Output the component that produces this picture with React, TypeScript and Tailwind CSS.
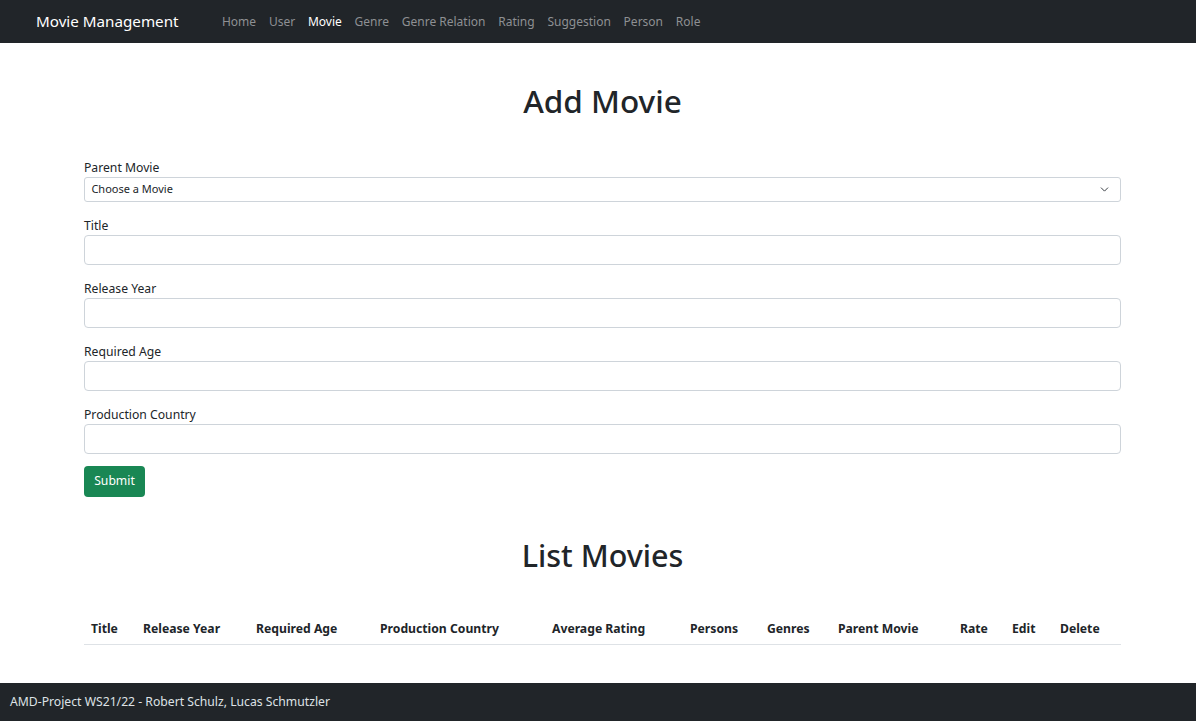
import { ChevronDown } from 'lucide-react'

const font = { fontFamily: '"Noto Sans", "Open Sans", sans-serif' }

const navLinks = ['Home', 'User', 'Movie', 'Genre', 'Genre Relation', 'Rating', 'Suggestion', 'Person', 'Role']

const columns = [
  { label: 'Title', w: 'w-[52px]' },
  { label: 'Release Year', w: 'w-[113px]' },
  { label: 'Required Age', w: 'w-[124px]' },
  { label: 'Production Country', w: 'w-[172px]' },
  { label: 'Average Rating', w: 'w-[138px]' },
  { label: 'Persons', w: 'w-[77px]' },
  { label: 'Genres', w: 'w-[71px]' },
  { label: 'Parent Movie', w: 'w-[122px]' },
  { label: 'Rate', w: 'w-[52px]' },
  { label: 'Edit', w: 'w-[48px]' },
  { label: 'Delete', w: 'w-[68px]' },
]

const fields = ['Title', 'Release Year', 'Required Age', 'Production Country']

export default function App() {
  return (
    <div className="min-h-[721px] flex flex-col bg-white text-[#212529]" style={font}>
      <nav className="h-[43px] shrink-0 bg-[#212529] flex items-center pl-[36px]">
        <span className="text-[15.2px] text-white mr-[37px]">Movie Management</span>
        <ul className="flex">
          {navLinks.map((link) => (
            <li key={link}>
              <a
                href="#"
                className={`block px-[6.4px] text-[12px] ${link === 'Movie' ? 'text-white' : 'text-[#8e9093]'}`}
              >
                {link}
              </a>
            </li>
          ))}
        </ul>
      </nav>

      <main className="flex-1 w-[1037px] ml-[84px]">
        <h1 className="text-center text-[31.5px] font-medium pt-[39px] leading-[38px]">Add Movie</h1>

        <form className="mt-[40px]">
          <label className="block text-[12.2px] leading-[16px] mb-[1px]">Parent Movie</label>
          <div className="relative">
            <select className="block appearance-none w-full h-[25px] border border-[#ced4da] rounded-[3px] pl-[6.4px] text-[11px] bg-white">
              <option>Choose a Movie</option>
            </select>
            <ChevronDown className="absolute right-[10px] top-[6px] w-[13px] h-[13px] text-[#343a40] pointer-events-none" strokeWidth={1.8} />
          </div>

          {fields.map((f) => (
            <div key={f} className="mt-[16px]">
              <label className="block text-[12.2px] leading-[16px] mb-[1px]">{f}</label>
              <input className="block w-full h-[30px] border border-[#ced4da] rounded-[4px] px-[9px] text-[12.2px]" />
            </div>
          ))}

          <button
            type="button"
            className="block mt-[12px] h-[31px] w-[61px] bg-[#198754] text-white text-[12.2px] rounded-[4px]"
          >
            Submit
          </button>
        </form>

        <h1 className="text-center text-[30.5px] font-medium mt-[39px] leading-[38px]">List Movies</h1>

        <table className="w-full table-fixed mt-[40px] mb-[38px]">
          <thead>
            <tr className="border-b border-[#dee2e6]">
              {columns.map((c) => (
                <th key={c.label} className={`${c.w} text-left font-bold text-[12.2px] px-[7px] py-[6px]`}>
                  {c.label}
                </th>
              ))}
            </tr>
          </thead>
          <tbody />
        </table>
      </main>

      <footer className="h-[38px] shrink-0 bg-[#212529] flex items-center pl-[10px]">
        <span className="text-[12.2px] text-[#dee2e6]">AMD-Project WS21/22 - Robert Schulz, Lucas Schmutzler</span>
      </footer>
    </div>
  )
}
